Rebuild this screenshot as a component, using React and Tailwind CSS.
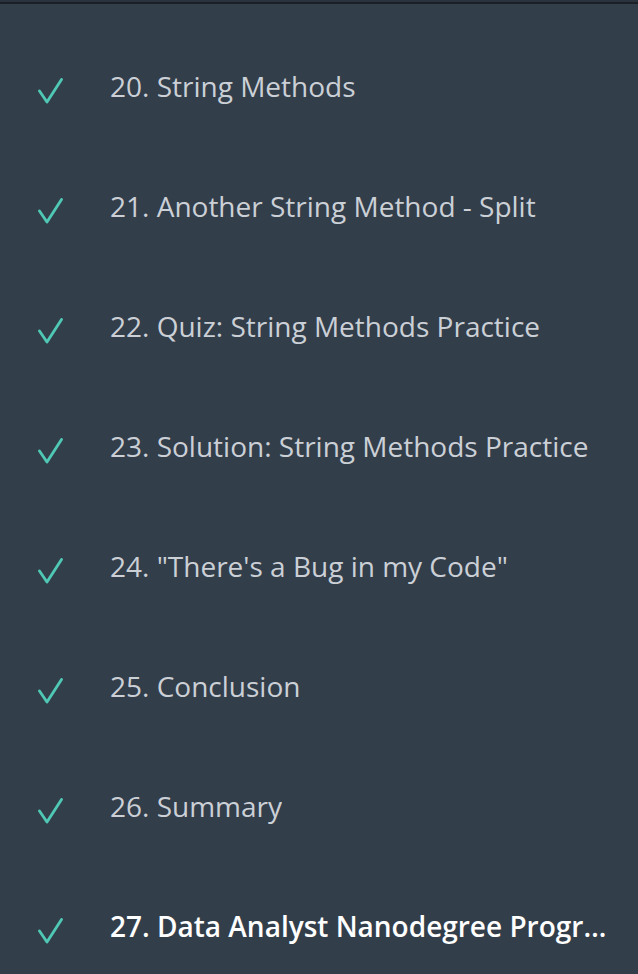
import React from "react";

const items = [
  { n: 20, title: "String Methods" },
  { n: 21, title: "Another String Method - Split" },
  { n: 22, title: "Quiz: String Methods Practice" },
  { n: 23, title: "Solution: String Methods Practice" },
  { n: 24, title: "\"There's a Bug in my Code\"" },
  { n: 25, title: "Conclusion" },
  { n: 26, title: "Summary" },
  { n: 27, title: "Data Analyst Nanodegree Program", active: true },
];

const Check = () => (
  <svg width="26" height="32" viewBox="0 0 26 32" className="shrink-0">
    <path
      d="M2.5 19 L10 30 L24.5 7.5"
      fill="none"
      stroke="#4fc9b5"
      strokeWidth="2.8"
      strokeLinecap="round"
      strokeLinejoin="round"
    />
  </svg>
);

const App = () => {
  return (
    <div className="w-[638px] h-[974px] overflow-hidden bg-[#333e4b] font-['Open_Sans',sans-serif]">
      <div className="h-[2px] bg-[#2a323d]" />
      <div className="h-[2px] bg-[#1b2027]" />
      <ul className="pt-[24px]">
        {items.map((item) => (
          <li key={item.n} className="h-[120px] flex items-center pl-[37px] pr-[30px]">
            <Check />
            <span
              className={
                "ml-[47px] mb-[4px] text-[28px] leading-[40px] truncate " +
                (item.active ? "text-white font-semibold" : "text-[#cbd0d6]")
              }
            >
              {item.n}. {item.title}
            </span>
          </li>
        ))}
      </ul>
    </div>
  );
};

export default App;
